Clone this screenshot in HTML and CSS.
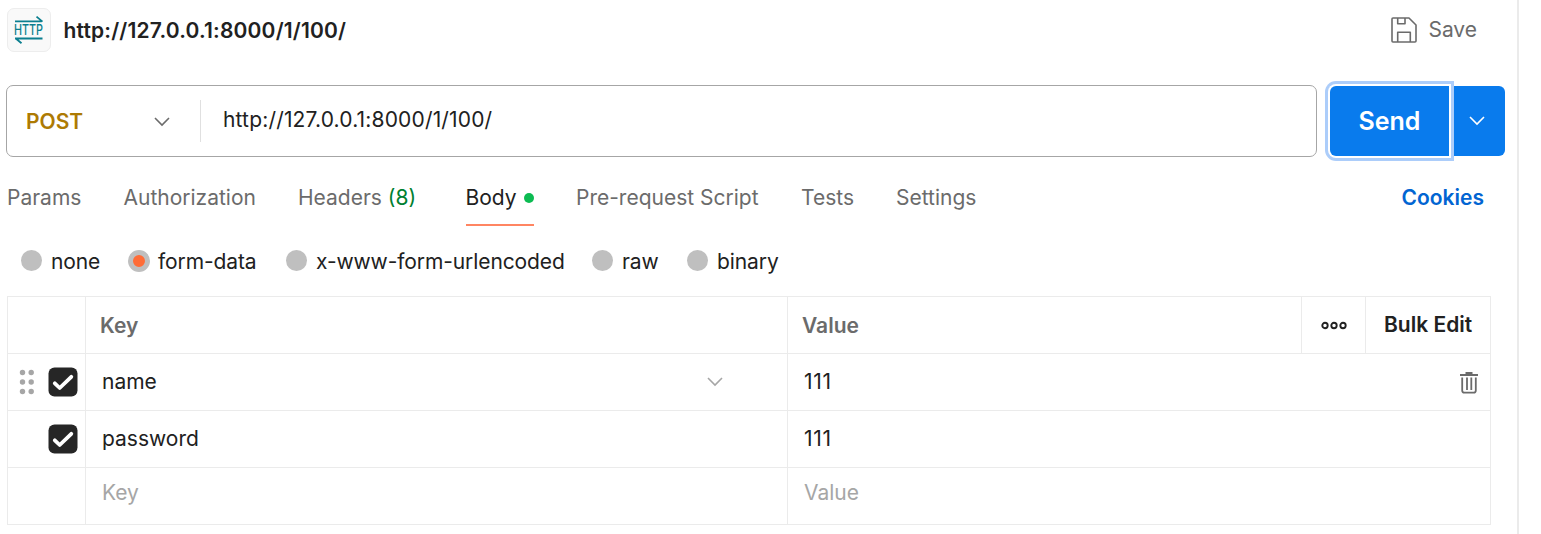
FILE: index.html
```html
<!DOCTYPE html>
<html lang="en">
<head>
<meta charset="utf-8">
<title>HTTP request</title>
<link rel="stylesheet" href="styles.css">
</head>
<body>
<main class="pane">
  <header class="head">
    <span class="badge">
      <svg width="42" height="42" viewBox="0 0 42 42">
        <path d="M7 12.3H33.5M34.5 12.6L28.5 7.6M7 29.5H34.5M7.5 29.2L13.5 34.2" fill="none" stroke="#0b7f8f" stroke-width="1.8"/>
        <text class="badge-text" x="6" y="26.2" textLength="29" lengthAdjust="spacingAndGlyphs">HTTP</text>
      </svg>
    </span>
    <h1 class="title"><span>http://127.0.0.1:8000/1/100/</span></h1>
    <button class="save">
      <svg width="26" height="26" viewBox="0 0 26 26" fill="none" stroke="#6b6b6b" stroke-width="1.6" stroke-linejoin="round"><path d="M1 2Q1 1 2 1H18L25 8V24Q25 25 24 25H2Q1 25 1 24ZM6.7 1V6.8H14V1M6.7 25V15.2H19.3V25"/></svg>
      <span>Save</span>
    </button>
  </header>
  <section class="request">
    <div class="urlbox">
      <button class="method"><span>POST</span>
        <svg width="16" height="10" viewBox="0 0 16 10" fill="none" stroke="#6b6b6b" stroke-width="1.6"><path d="M1 1L8 8L15 1"/></svg>
      </button>
      <div class="url"><span>http://127.0.0.1:8000/1/100/</span></div>
    </div>
    <button class="send"><span>Send</span></button>
    <button class="more">
      <svg width="16" height="10" viewBox="0 0 16 10" fill="none" stroke="#fff" stroke-width="1.6"><path d="M1 1L8 8L15 1"/></svg>
    </button>
  </section>
  <nav class="tabs">
    <a><span>Params</span></a>
    <a><span>Authorization</span></a>
    <a><span>Headers <span class="count">(8)</span></span></a>
    <a><span class="active">Body<i class="dot"></i></span></a>
    <a><span>Pre-request Script</span></a>
    <a><span>Tests</span></a>
    <a><span>Settings</span></a>
    <a class="cookies"><span>Cookies</span></a>
  </nav>
  <div class="modes">
    <label><i class="radio"></i><span>none</span></label>
    <label><i class="radio on"></i><span>form-data</span></label>
    <label><i class="radio"></i><span>x-www-form-urlencoded</span></label>
    <label><i class="radio"></i><span>raw</span></label>
    <label><i class="radio"></i><span>binary</span></label>
  </div>
  <section class="table">
    <div class="row th">
      <div class="name"></div><div class="name"><span>Key</span></div><div class="name"><span>Value</span></div>
      <div class="dots"><svg width="26" height="9" viewBox="0 0 26 9" fill="none" stroke="#212121" stroke-width="1.9"><circle cx="4" cy="4.5" r="2.7"/><circle cx="13" cy="4.5" r="2.7"/><circle cx="22" cy="4.5" r="2.7"/></svg></div>
      <div class="bulk"><span>Bulk Edit</span></div>
    </div>
    <div class="row">
      <div class="tick">
        <svg width="16" height="26" viewBox="0 0 16 26" fill="#a6a6a6"><circle cx="3.5" cy="3.5" r="2.7"/><circle cx="12.2" cy="3.5" r="2.7"/><circle cx="3.5" cy="13" r="2.7"/><circle cx="12.2" cy="13" r="2.7"/><circle cx="3.5" cy="22.5" r="2.7"/><circle cx="12.2" cy="22.5" r="2.7"/></svg>
        <svg width="30" height="30" viewBox="0 0 30 30"><rect x=".5" y=".5" width="29" height="29" rx="6" fill="#262626"/><path d="M6.8 16.3L11.7 21L23.3 9.8" fill="none" stroke="#fff" stroke-width="3.8" stroke-linecap="round" stroke-linejoin="round"/></svg>
      </div>
      <div class="key"><span>name</span>
        <svg width="16" height="10" viewBox="0 0 16 10" fill="none" stroke="#a6a6a6" stroke-width="1.6"><path d="M1 1L8 8L15 1"/></svg>
      </div>
      <div class="val"><span class="digits">111</span>
        <svg class="trash" width="18" height="22" viewBox="0 0 18 22" fill="none" stroke="#6b6b6b"><path d="M0 3H18" stroke-width="2"/><path d="M5.5 1.2H12.5" stroke-width="2.4"/><path d="M2.2 5.5V18.5Q2.2 20.7 4.4 20.7H13.6Q15.8 20.7 15.8 18.5V5.5M7 5.5V18M11.3 5.5V18" stroke-width="1.8"/></svg>
      </div>
    </div>
    <div class="row">
      <div class="tick">
        <svg width="30" height="30" viewBox="0 0 30 30"><rect x=".5" y=".5" width="29" height="29" rx="6" fill="#262626"/><path d="M6.8 16.3L11.7 21L23.3 9.8" fill="none" stroke="#fff" stroke-width="3.8" stroke-linecap="round" stroke-linejoin="round"/></svg>
      </div>
      <div class="key"><span>password</span></div>
      <div class="val"><span class="digits">111</span></div>
    </div>
    <div class="row empty">
      <div></div>
      <div class="key"><span>Key</span></div>
      <div class="val"><span>Value</span></div>
    </div>
  </section>
</main>
</body>
</html>
```
FILE: styles.css
```css
* { box-sizing: border-box; }
body { margin: 0; background: #fff; color: #212121; font: 400 21px/26px Inter, sans-serif; }
button { border: 0; padding: 0; background: none; font: inherit; color: inherit; }
svg { display: block; flex: none; overflow: visible; }
.pane { width: 1519px; height: 534px; border-right: 2px solid #ebebeb; overflow: hidden; }

.head { display: flex; align-items: center; height: 85px; padding: 0 40px 25px 7px; }
.badge { width: 44px; height: 44px; border: 1px solid #ededed; border-radius: 7px; background: #f9f9f9; }
.badge-text { font: 500 14.5px Inter, sans-serif; fill: #0b7f8f; }
.title { margin: 1px 0 0 12.5px; font-size: 21px; font-weight: 600; letter-spacing: .18px; }
.save { display: flex; align-items: center; gap: 11px; margin-left: auto; color: #6b6b6b; }

.request { display: flex; height: 72px; padding-left: 6px; align-items: center; }
.urlbox { display: flex; align-items: center; width: 1311px; height: 72px; border: 1px solid #a6a6a6; border-radius: 7px; }
.method { display: flex; align-items: center; justify-content: space-between; width: 194px; height: 42px; padding: 1px 30px 0 19px; border-right: 1px solid #e0e0e0; color: #ad7a03; font-weight: 600; }
.url { padding: 0 0 3px 22px; letter-spacing: .17px; }
.send { width: 119px; height: 70px; margin-left: 13px; border-radius: 6px 0 0 6px; background: #097bed; color: #fff; font-size: 25px; font-weight: 600; box-shadow: 0 0 0 2px #fff, 0 0 0 5px #accdfa; z-index: 1; }
.more { display: grid; place-items: center; width: 51px; height: 70px; margin-left: 5px; padding-right: 6px; border-radius: 0 6px 6px 0; background: #097bed; }

.tabs { display: grid; grid-template-columns: 116.5px 174.5px 167.5px 110.5px 225px 95px 1fr auto; height: 69px; padding: 28px 33px 0 7px; color: #6b6b6b; }
.count { color: #007f31; }
.active { display: flex; align-items: center; justify-content: space-between; width: 68.5px; height: 41px; padding-bottom: 13px; border-bottom: 2px solid #ff8562; color: #212121; }
.dot { width: 10px; height: 10px; border-radius: 50%; background: #0cbb52; }
.cookies { color: #0265d2; font-weight: 600; }

.modes { display: grid; grid-template-columns: 107px 158px 306px 95px 1fr; align-items: center; height: 70px; padding-left: 21px; letter-spacing: -.1px; }
.modes label { display: flex; align-items: center; gap: 9px; padding-top: 2px; }
.radio { width: 21px; height: 21px; margin-top: -3px; border-radius: 50%; background: #bfbfbf; }
.radio.on { width: 22px; height: 22px; margin-right: -1px; border: 5px solid #bfbfbf; background: #ff6c37; }

.table { width: 1484px; margin-left: 7px; border: solid #ebebeb; border-width: 1px 0 0 1px; }
.row { display: grid; grid-template-columns: 78px 702px 703px; height: 57px; }
.row.th { grid-template-columns: 78px 702px 514px 64px 125px; color: #6b6b6b; font-weight: 600; }
.row > div { display: flex; align-items: center; justify-content: space-between; padding: 0 14px; border: solid #ebebeb; border-width: 0 1px 1px 0; }
.row > .name { padding-top: 2px; }
.row > .dots { justify-content: center; padding: 0; }
.row > .bulk { padding: 0 0 1px 18px; color: #212121; }
.row > .tick { justify-content: flex-end; gap: 13px; padding: 0 7px 0 0; }
.row > .key { padding: 0 64px 0 16px; }
.row > .val { padding: 0 12px 0 16px; }
.digits { letter-spacing: .7px; }
.trash { margin-top: 2px; }
.row.empty { color: #a6a6a6; }
.row.empty > div { padding-bottom: 6px; }
```
